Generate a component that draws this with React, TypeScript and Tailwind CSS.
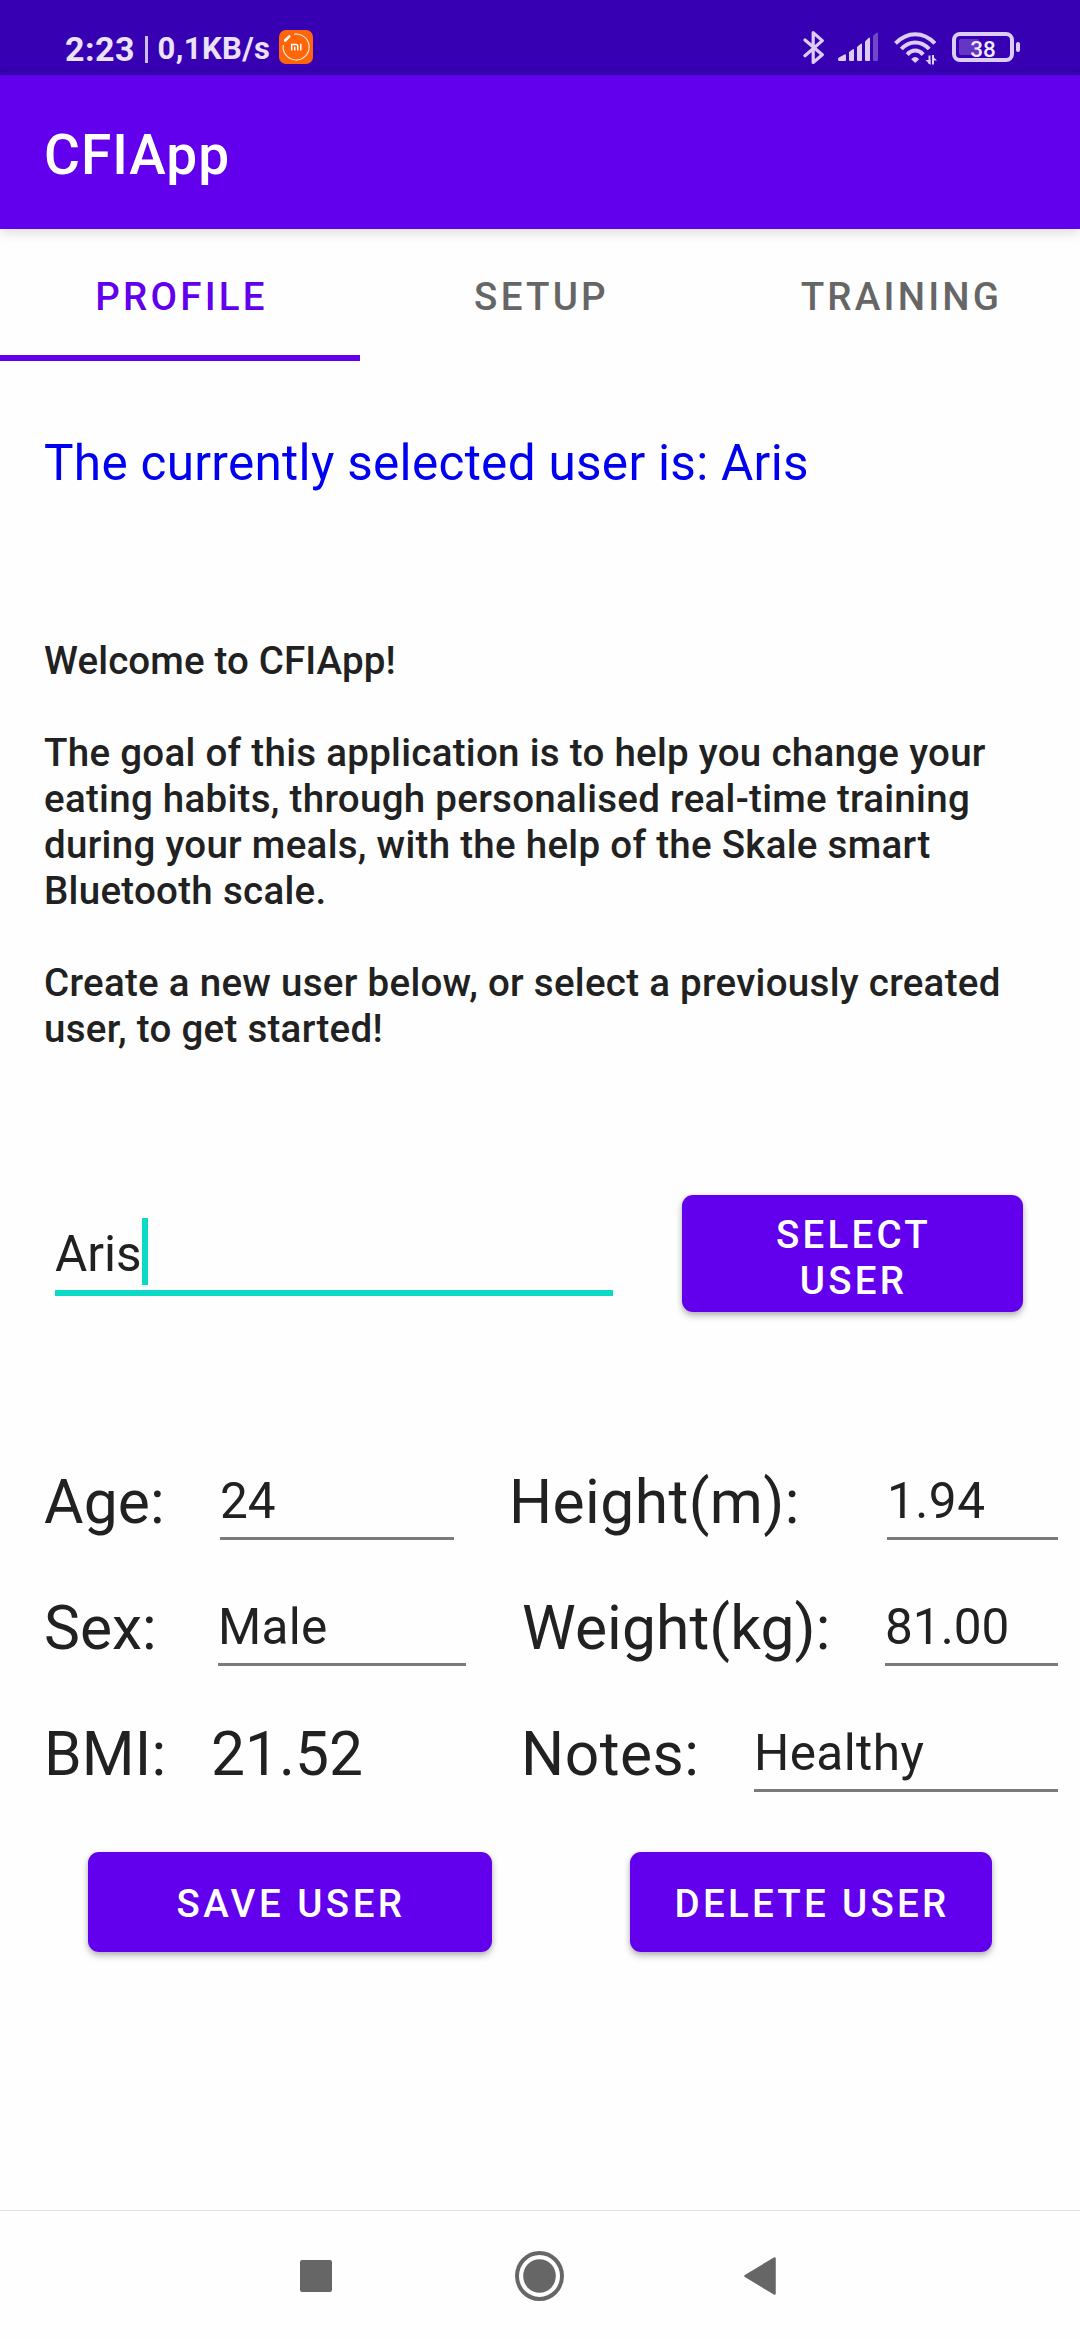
import type { ReactNode } from "react";

function BluetoothIcon() {
  return (
    <svg width="22" height="36" viewBox="0 0 22 36" fill="none" stroke="#dccdf5" strokeWidth="3.2" strokeLinejoin="round" strokeLinecap="round">
      <path d="M2 10 L19.3 24.8 L10.2 32.400 L10.2 2.600 L19.3 10.600 L2 25.800" />
    </svg>
  );
}

function SignalIcon() {
  return (
    <svg width="42" height="30" viewBox="0 0 42 30" fill="#dccdf5">
      <path d="M0 27.2 Q0 26 1 25.4 L6.5 22.4 Q8 21.8 8 23.4 V28 Q8 29 7 29 H1 Q0 29 0 27.2 Z" />
      <path d="M11 20 L14.5 17.4 Q16 16.6 16 18 V28 Q16 29 15 29 H12 Q11 29 11 28 Z" />
      <path d="M19 15 L22.5 12 Q24 11 24 12.6 V28 Q24 29 23 29 H20 Q19 29 19 28 Z" />
      <path d="M27 9.5 L30.5 6 Q32 5 32 6.6 V28 Q32 29 31 29 H28 Q27 29 27 28 Z" />
      <path d="M35 3.8 L38.5 0.8 Q40 0 40 1.4 V28 Q40 29 39 29 H36 Q35 29 35 28 Z" fill="#7345c9" />
    </svg>
  );
}

function WifiIcon() {
  return (
    <svg width="44" height="34" viewBox="0 0 44 34" fill="none" stroke="#dccdf5" strokeWidth="4">
      <path d="M1.5 11.3 Q10.500 2.200 21.200 2.200 Q32 2.200 40.900 11.300" />
      <path d="M7.300 17 Q13.500 10.400 21.200 10.400 Q29 10.400 35.200 17" />
      <path d="M13.200 22.600 Q16.800 18.600 21.200 18.600 Q25.600 18.600 29.200 22.600" />
      <path d="M17.200 27.300 Q21.200 22.800 25.200 27.300 L21.200 31 Z" fill="#dccdf5" stroke="none" />
      <path d="M35.500 23.500 V32 M39 23 V32.500" strokeWidth="2" />
      <path d="M31.500 28 H36.500 V33 Z M38 23.500 L43 28.500 H38 Z" fill="#dccdf5" stroke="none" />
    </svg>
  );
}

function Battery() {
  return (
    <div className="flex items-center">
      <div className="relative flex h-[30px] w-[62px] items-center justify-center rounded-[8px] border-4 border-[#dccdf5]">
        <span className="absolute left-[3px] top-[3px] h-[16px] w-[20px] rounded-[2px] bg-[#6535c4]" />
        <span className="relative pt-[3px] text-[22.500px] font-medium leading-[22px] text-[#f1eafc]">38</span>
      </div>
      <span className="ml-[2px] h-[10px] w-[4px] rounded-[2px] bg-[#dccdf5]" />
    </div>
  );
}

function MiIcon() {
  return (
    <svg className="ml-[8px]" width="34" height="34" viewBox="0 0 34 34" fill="none">
      <rect width="34" height="34" rx="7" fill="#ff660a" />
      <path d="M15 4.200 A13 13 0 1 1 4.300 15" stroke="#ffe3cf" strokeWidth="1.200" />
      <path d="M6.200 10.500 L10.300 6.400" stroke="#fff" strokeWidth="2.600" strokeLinecap="round" />
      <path d="M12.700 20.500 V14.600 H17 Q18.800 14.600 18.800 16.500 V20.500 M15.700 16.800 V20.500 M21.800 13.800 V20.500" stroke="#fff" strokeWidth="1.500" />
    </svg>
  );
}

function StatusBar() {
  return (
    <div className="flex h-[75px] items-start justify-between bg-[#3700b3] pl-[65px] pr-[60px] pt-[30px] text-[#ebe2fa]">
      <div className="flex h-[34px] items-center whitespace-nowrap font-bold">
        <span className="w-[80px] pt-[3px] text-[34px] leading-[34px] tracking-[0.500px]">2:23</span>
        <span className="mt-[5px] h-[27px] w-[2.500px] bg-[#cdbdec]" />
        <span className="ml-[10px] w-[113px] pt-[3px] text-[31px] leading-[34px] tracking-[0.400px]">0,1KB/s</span>
        <MiIcon />
      </div>
      <div className="flex items-start">
        <BluetoothIcon />
        <div className="ml-[13px] mt-[2px]"><SignalIcon /></div>
        <div className="ml-[14px] mt-[2px]"><WifiIcon /></div>
        <div className="ml-[14px] mt-[2px]"><Battery /></div>
      </div>
    </div>
  );
}

function Tab({ label, active = false }: { label: string; active?: boolean }) {
  return (
    <div
      className={
        active
          ? "flex flex-1 items-center justify-center border-b-[6px] border-[#6200ee] pl-[3px] pt-[10px] text-[#6200ee]"
          : "flex flex-1 items-center justify-center border-b-[6px] border-transparent pl-[3px] pt-[10px] text-[#666666]"
      }
    >
      <span className="text-[38.500px] font-medium leading-[46px] tracking-[3.220px]">{label}</span>
    </div>
  );
}

function Button({ children, className }: { children: ReactNode; className: string }) {
  return (
    <button
      className={`rounded-[11px] bg-[#6200ee] pl-[2px] text-center text-[38.500px] font-medium leading-[46px] text-white shadow-[0_4px_7px_rgba(0,0,0,0.24),0_1px_5px_rgba(0,0,0,0.12)] ${className}`}
    >
      {children}
    </button>
  );
}

function Label({ children, className }: { children: ReactNode; className: string }) {
  return <span className={`shrink-0 whitespace-nowrap pt-[3px] text-[60.500px] leading-[72px] ${className}`}>{children}</span>;
}

function Field({ children, className }: { children: ReactNode; className: string }) {
  return (
    <span className={`h-[78px] border-b-[3px] border-[#7a7a7a] text-[49.500px] leading-[78px] ${className}`}>{children}</span>
  );
}

export default function App() {
  return (
    <div className="flex h-[2340px] w-[1080px] flex-col overflow-hidden bg-[#fefefe] font-['Roboto',sans-serif] text-[#212121]">
      <StatusBar />
      <header className="flex h-[154px] items-center bg-[#6200ee] pl-[44px] pt-[6px] shadow-[0_3px_12px_rgba(0,0,0,0.15)]">
        <h1 className="text-[55px] font-medium leading-[64px] tracking-[1px] text-white">CFIApp</h1>
      </header>
      <nav className="flex h-[132px]">
        <Tab label="PROFILE" active />
        <Tab label="SETUP" />
        <Tab label="TRAINING" />
      </nav>

      <main className="flex flex-1 flex-col pt-[72px]">
        <p className="pl-[44px] text-[49.500px] leading-[60px] tracking-[0.290px] text-[#0000ee]">
          The currently selected user is: Aris
        </p>

        <div className="mt-[145px] flex flex-col gap-[46px] whitespace-nowrap pl-[44px] text-[38.500px] font-medium leading-[46px] tracking-[0.290px]">
          <p className="tracking-[0.130px]">Welcome to CFIApp!</p>
          <p>
            The goal of this application is to help you change your
            <br />
            eating habits, through personalised real-time training
            <br />
            during your meals, with the help of the Skale smart
            <br />
            Bluetooth scale.
          </p>
          <p>
            Create a new user below, or select a previously created
            <br />
            user, to get started!
          </p>
        </div>

        <div className="mt-[143px] flex h-[117px] pl-[55px]">
          <div className="mt-[23px] flex h-[78px] w-[558px] items-start border-b-[6px] border-[#0bdac7]">
            <span className="text-[49.500px] leading-[72px]">Aris</span>
            <span className="h-[67px] w-[6px] bg-[#0bdac7]" />
          </div>
          <Button className="ml-[69px] h-[117px] w-[341px] pt-[8px] tracking-[3.220px]">
            SELECT
            <br />
            USER
          </Button>
        </div>

        <div className="mt-[126px] pl-[44px] pr-[22px]">
          <div className="flex h-[126px] items-center">
            <Label className="w-[176px] tracking-[0.200px]">Age:</Label>
            <Field className="w-[234px]">24</Field>
            <Label className="ml-[55px] w-[378px] tracking-[0.440px]">Height(m):</Label>
            <Field className="flex-1 tracking-[0.500px]">1.94</Field>
          </div>
          <div className="flex h-[126px] items-center">
            <Label className="w-[174px]">Sex:</Label>
            <Field className="w-[248px] tracking-[0.270px]">Male</Field>
            <Label className="ml-[56px] w-[363px] tracking-[0.120px]">Weight(kg):</Label>
            <Field className="flex-1">81.00</Field>
          </div>
          <div className="flex h-[126px] items-center">
            <Label className="w-[167px] tracking-[0.150px]">BMI:</Label>
            <Label className="w-[310px]">21.52</Label>
            <Label className="w-[233px] tracking-[0.500px]">Notes:</Label>
            <Field className="flex-1 tracking-[0.400px]">Healthy</Field>
          </div>
        </div>

        <div className="mt-[36px] flex pl-[88px]">
          <Button className="h-[100px] w-[404px] pt-[4px] tracking-[3.470px]">SAVE USER</Button>
          <Button className="ml-[138px] h-[100px] w-[362px] pt-[4px] tracking-[3.260px]">DELETE USER</Button>
        </div>
      </main>

      <footer className="flex h-[130px] items-center border-t border-[#e2e2e2] pl-[300px]">
        <span className="h-[32px] w-[32px] rounded-[2px] bg-[#666666]" />
        <svg className="ml-[183px]" width="49" height="50" viewBox="0 0 49 50">
          <ellipse cx="24.500" cy="25" rx="22.500" ry="23" fill="none" stroke="#666666" strokeWidth="4" />
          <ellipse cx="24.500" cy="25" rx="16.300" ry="16.800" fill="#666666" />
        </svg>
        <svg className="ml-[180px]" width="32" height="38" viewBox="0 0 32 38">
          <path d="M1.500 19 L30.500 1.500 V36.500 Z" fill="#666666" stroke="#666666" strokeWidth="2.500" strokeLinejoin="round" />
        </svg>
      </footer>
    </div>
  );
}
